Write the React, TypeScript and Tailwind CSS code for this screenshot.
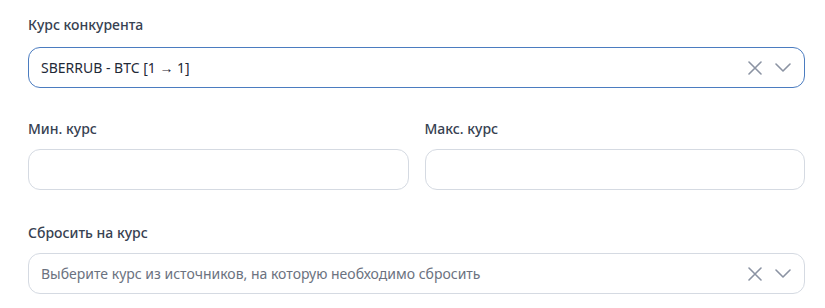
import type { ReactNode } from 'react';

const font = { fontFamily: '"Noto Sans", "Open Sans", Arial, sans-serif' };

function ClearIcon() {
  return (
    <svg width="14" height="14" viewBox="0 0 14 14" fill="none" className="text-[#8b93a3]">
      <path d="M1 1L13 13M13 1L1 13" stroke="currentColor" strokeWidth="1.6" strokeLinecap="round" />
    </svg>
  );
}

function ChevronIcon() {
  return (
    <svg width="16" height="9" viewBox="0 0 16 9" fill="none" className="text-[#8b93a3]">
      <path d="M1 1L8 8L15 1" stroke="currentColor" strokeWidth="1.6" strokeLinecap="round" strokeLinejoin="round" />
    </svg>
  );
}

function Field({ label, children, space = 'mb-[10px]' }: { label: string; children: ReactNode; space?: string }) {
  return (
    <div className="flex flex-col">
      <label className={'h-5 leading-5 text-[14px] font-medium text-[#374151] ' + space}>{label}</label>
      {children}
    </div>
  );
}

function Select({ value, placeholder, focused }: { value?: string; placeholder?: string; focused?: boolean }) {
  return (
    <div
      className={
        'h-[41px] rounded-xl bg-white border flex items-center pl-3 pr-[13px] ' +
        (focused ? 'border-[#4b7cc0]' : 'border-[#d5dae2]')
      }
    >
      <span className={'flex-1 text-[14px] truncate ' + (value ? 'text-[#1f2937]' : 'text-[#6b7280]')}>
        {value ?? placeholder}
      </span>
      <div className="flex items-center gap-[13px]">
        <ClearIcon />
        <ChevronIcon />
      </div>
    </div>
  );
}

function Input() {
  return <input className="h-[41px] w-full rounded-xl bg-white border border-[#d5dae2] px-3 outline-none" />;
}

export default function App() {
  return (
    <div className="bg-white w-[825px] h-[308px] pl-[28px] pt-[15px] pr-[20px]" style={font}>
      <div className="flex flex-col">
        <Field label="Курс конкурента" space="mb-[12px]">
          <Select value="SBERRUB - BTC [1 → 1]" focused />
        </Field>
        <div className="grid grid-cols-2 gap-4 mt-[31px]">
          <Field label="Мин. курс">
            <Input />
          </Field>
          <Field label="Макс. курс">
            <Input />
          </Field>
        </div>
        <div className="mt-[33px]">
          <Field label="Сбросить на курс">
            <Select placeholder="Выберите курс из источников, на которую необходимо сбросить" />
          </Field>
        </div>
      </div>
    </div>
  );
}
